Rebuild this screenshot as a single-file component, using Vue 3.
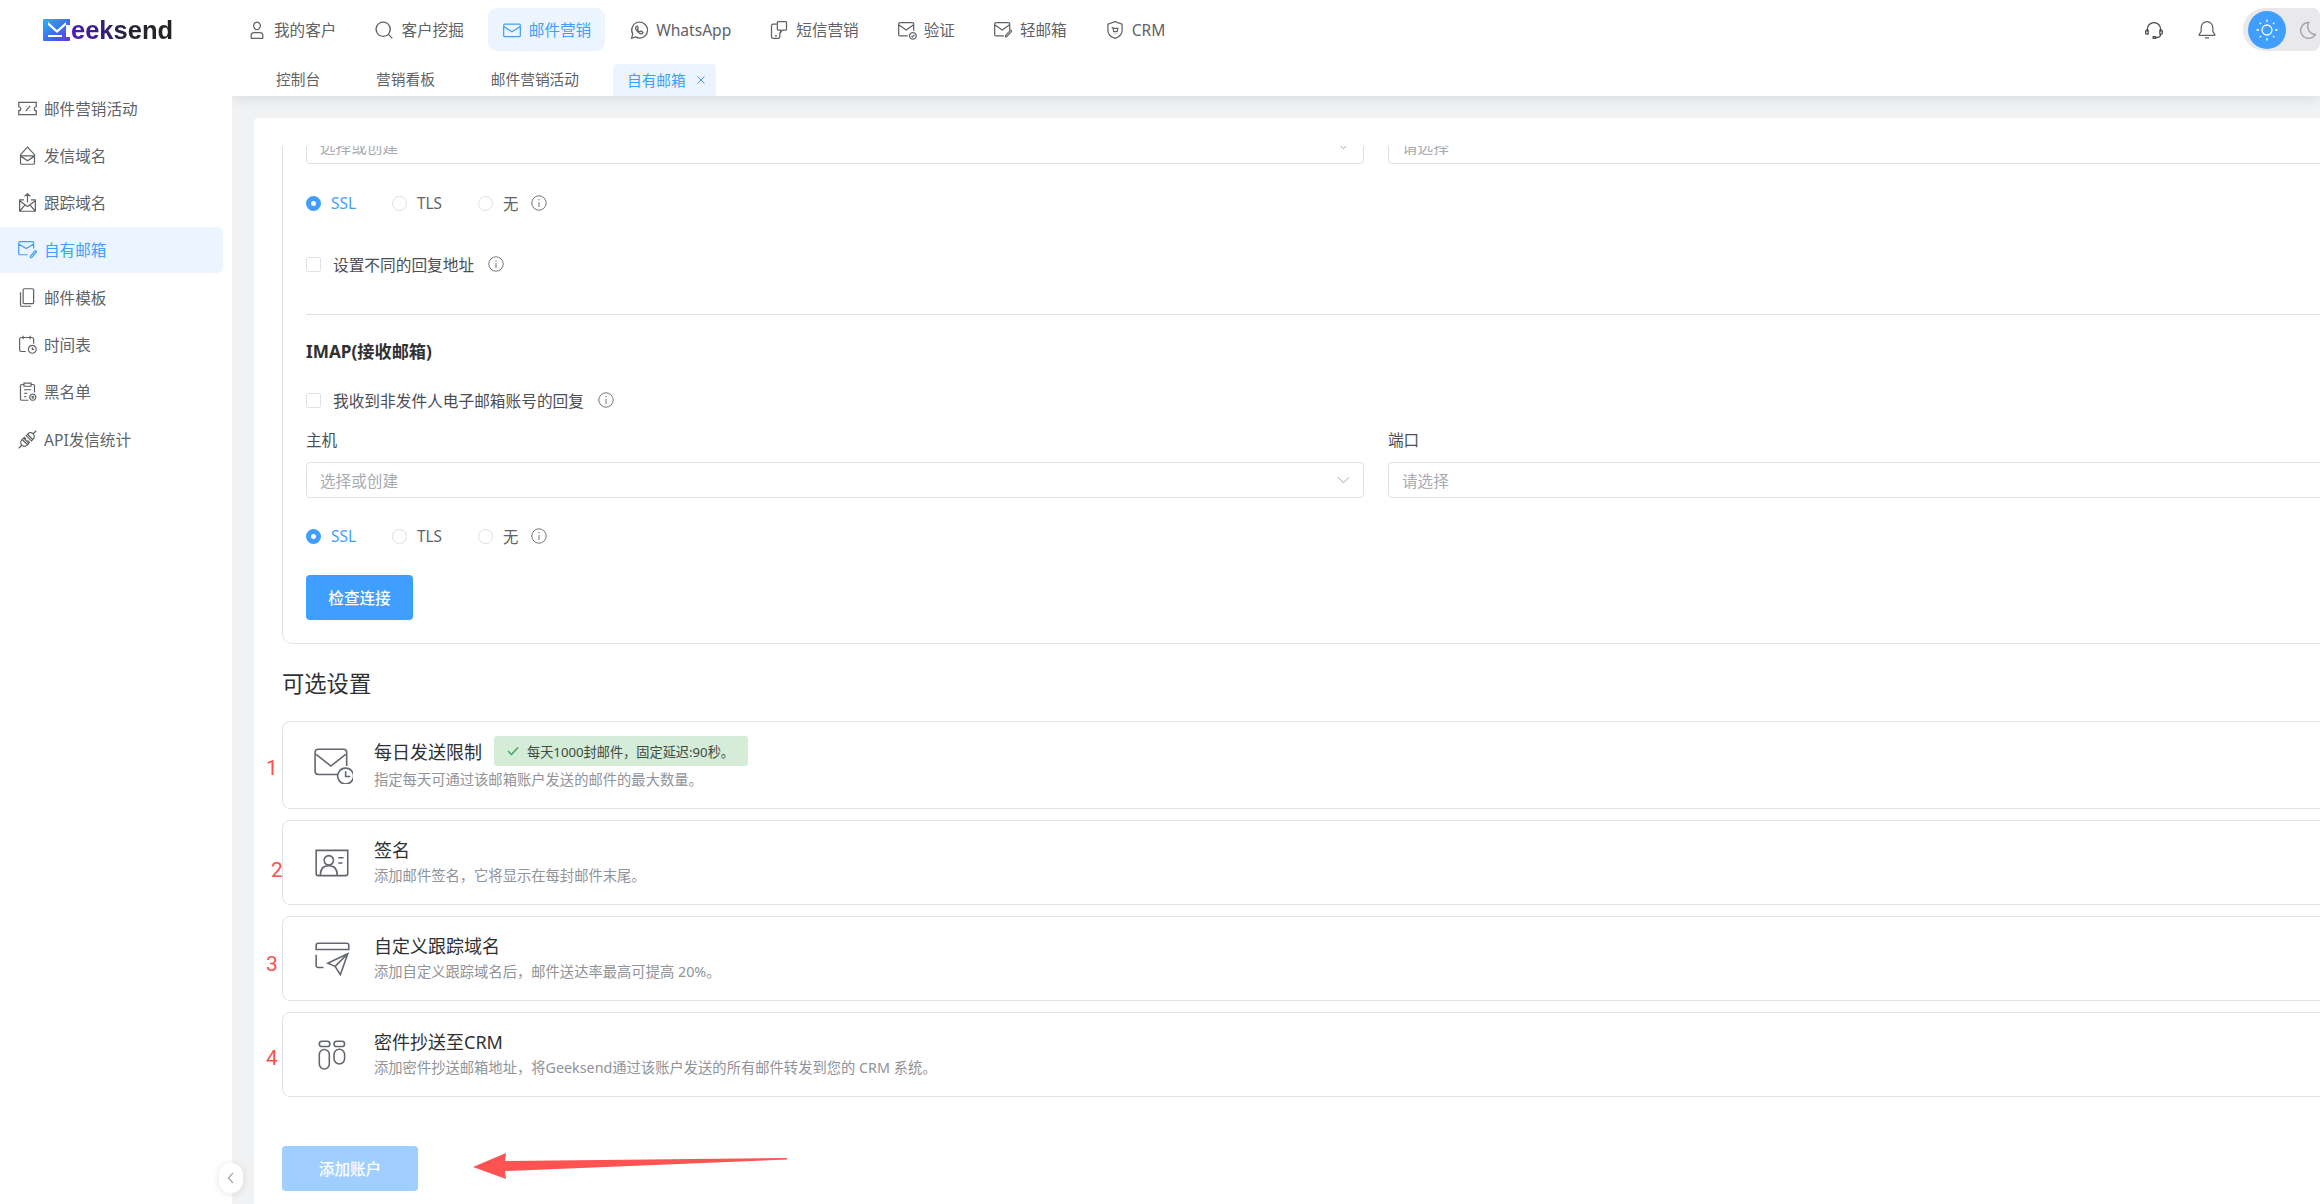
<script setup>
const mail = 'M3.5 5h17a1.5 1.5 0 0 1 1.5 1.5v12a1.5 1.5 0 0 1-1.5 1.5h-17A1.5 1.5 0 0 1 2 18.5v-12A1.5 1.5 0 0 1 3.500 5zM2.500 8l9.500 6 9.500-6'
const nav = [
  { t: '我的客户', d: 'M12 2.500a4 4.500 0 1 0 .01 0zM5 21.500v-3a3.500 3.500 0 0 1 3.500-3.500h7a3.500 3.500 0 0 1 3.500 3.500v3a.5.5 0 0 1-.5.5h-13a.5.5 0 0 1-.5-.5z' },
  { t: '客户挖掘', d: 'M11 2.500a8.500 8.500 0 1 0 .01 0zM17 17l5 5' },
  { t: '邮件营销', d: mail, on: true },
  { t: 'WhatsApp', d: 'M3 22l1.500-5.200A9.500 9.500 0 1 1 8 20.300zM9 7.500c-1.500 1-1.500 3 .5 5.700s4.500 4 6.300 3.200l1-1.700-2.500-1.500-1.200 1c-1.300-.5-2.500-2-3-3.200l1-1.200-1-2.500z' },
  { t: '短信营销', d: 'M9 5H5a2 2 0 0 0-2 2v13a2 2 0 0 0 2 2h6a2 2 0 0 0 2-2v-5M7 19h2.500M11 2h9a1 1 0 0 1 1 1v8a1 1 0 0 1-1 1h-4l-2 3v-3h-3a1 1 0 0 1-1-1V3a1 1 0 0 1 1-1z' },
  { t: '验证', d: 'M13 19H3.500A1.500 1.500 0 0 1 2 17.500v-13A1.500 1.500 0 0 1 3.500 3h15A1.500 1.500 0 0 1 20 4.500V13M2.500 6l8.500 6 8.500-6M19 15a4 4 0 1 0 .01 0zM17.300 19l1.300 1.300 2.200-2.500' },
  { t: '轻邮箱', d: 'M13 19H3.500A1.500 1.500 0 0 1 2 17.500v-13A1.500 1.500 0 0 1 3.500 3h15A1.500 1.500 0 0 1 20 4.500V12M2.500 6l8.500 6 8.500-6M22 14l-5.500 6c-.8 1-2.300-.3-1.500-1.300l5.500-6c.8-.8 2.300.3 1.500 1.300z' },
  { t: 'CRM', d: 'M12 2l8.500 3v8c0 4.500-4 7.500-8.500 9-4.500-1.500-8.500-4.500-8.500-9V5zM8 9h1.500l1 5h4l1-4H10M11 16.500h.5M14 16.500h.5' },
]
const side = [
  { t: '邮件营销活动', d: 'M2 5h20v5a2 2 0 0 0 0 4.500V19H2v-4.500a2 2 0 0 0 0-4.500zM15 9l-5 6M10 9.500h.5M14.500 14.500h.5' },
  { t: '发信域名', d: 'M4 11l8-8.500 8 8.500v9.500a1.500 1.500 0 0 1-1.500 1.500h-13A1.500 1.500 0 0 1 4 20.500zM4 12.500h16M4.500 13l7.500 5 7.500-5' },
  { t: '跟踪域名', d: 'M8 9H3v13h18V9h-5M3 10l9 6.500 9-6.500M3 22l6-7M21 22l-6-7M12 12V2M8.500 5L12 2l3.500 3' },
  { t: '自有邮箱', d: 'M12 18H3.500A1.500 1.500 0 0 1 2 16.500v-12A1.500 1.500 0 0 1 3.500 3h14A1.500 1.500 0 0 1 19 4.500V11M2.500 6L10.500 11 18.500 6M22 15l-5 6c-.8 1-2.300-.3-1.500-1.300l5-6c.8-.8 2.300.3 1.500 1.300z', on: true },
  { t: '邮件模板', d: 'M7 3.500A1.500 1.500 0 0 1 8.500 2h9A1.500 1.500 0 0 1 19 3.500V18a1 1 0 0 1-1 1H8a1 1 0 0 1-1-1zM4 6v14.500A1.500 1.500 0 0 0 5.500 22H16' },
  { t: '时间表', d: 'M10 20H5a2 2 0 0 1-2-2V6a2 2 0 0 1 2-2h12a2 2 0 0 1 2 2v5M7 2v4M15 2v4M17.500 13a4.500 4.500 0 1 0 .01 0zM17.500 15v2.500h2' },
  { t: '黑名单', d: 'M8 4H5.500A1.500 1.500 0 0 0 4 5.500v15A1.500 1.500 0 0 0 5.500 22H13M16 4h2.500A1.500 1.500 0 0 1 20 5.500V13M8 2.500h8V6H8zM8 10h8M8 14h4M8 18h3M18 15a3.500 3.500 0 1 0 .01 0zM16.800 17.300l2.400 2.400M19.200 17.300l-2.400 2.400' },
  { t: 'API发信统计', d: 'M2 22l4-4M6 12l6 6M7.500 10.500l6 6-2 2a4 4 0 0 1-6-6zM22 2l-4 4M12 6l6 6M10.500 7.500l2-2a4 4 0 0 1 6 6l-2 2zM8 9l2.500 2.500M12 13l2.500 2.500' },
]
const tabs = ['控制台', '营销看板', '邮件营销活动']
const opts = [
  { cls: 'c1', n: '1', t: '每日发送限制', s: '指定每天可通过该邮箱账户发送的邮件的最大数量。', badge: '每天1000封邮件，固定延迟:90秒。',
    d: 'M24 27H5a3 3 0 0 1-3-3V6a3 3 0 0 1 3-3h24a3 3 0 0 1 3 3v13M3 8l14 11L31 8M31 21a7.500 7.500 0 1 0 .01 0zM31 24v5h4.500' },
  { cls: 'c2', n: '2', t: '签名', s: '添加邮件签名，它将显示在每封邮件末尾。',
    d: 'M3 6h30v22a2 2 0 0 1-2 2H5a2 2 0 0 1-2-2zM15 11a4.500 4.500 0 1 0 .01 0zM7 29.500c0-6 3-9 8-9s8 3 8 9M24 13h5M24 18h4' },
  { cls: 'c3', n: '3', t: '自定义跟踪域名', s: '添加自定义跟踪域名后，邮件送达率最高可提高 20%。',
    d: 'M5 3h27a2 2 0 0 1 2 2v4H3V5a2 2 0 0 1 2-2zM3 14v11a2 2 0 0 0 2 1h5M33 13L14 22l7 3 5 8zM33 13L21 25' },
  { cls: 'c4', n: '4', t: '密件抄送至CRM', s: '添加密件抄送邮箱地址，将Geeksend通过该账户发送的所有邮件转发到您的 CRM 系统。',
    d: 'M8.500 5h5a2.500 2.500 0 0 1 0 5h-5a2.500 2.500 0 0 1 0-5zM22.500 5h5a2.500 2.500 0 0 1 0 5h-5a2.500 2.500 0 0 1 0-5zM6 17.500a4.750 4.750 0 0 1 9.500 0v9a4.750 4.750 0 0 1-9.500 0zM20 17.500a5 5 0 0 1 10 0v4a5 5 0 0 1-10 0z' },
]
</script>

<template>
  <div class="app">
    <header class="top">
      <div class="logo">
        <svg class="mark" viewBox="0 0 28 22">
          <defs>
            <linearGradient id="lg" x1="0" y1="0" x2="1" y2="1">
              <stop offset="0" stop-color="#22b8f5" />
              <stop offset=".55" stop-color="#3d6cf0" />
              <stop offset="1" stop-color="#6a35d8" />
            </linearGradient>
          </defs>
          <path fill="url(#lg)" d="M1 0h26v6l-4 0v11H23v1h4v3a1 1 0 0 1-1 1H1a1 1 0 0 1-1-1V1a1 1 0 0 1 1-1z" />
          <path fill="#fff" d="M5 3l9 8 9-8v3l-9 8-9-8zM5 16h14v2H5z" />
        </svg>
        <span class="word">eeksend</span>
      </div>
      <nav class="nav">
        <a v-for="n in nav" :key="n.t" class="nav-item" :class="{ on: n.on }">
          <svg class="ic" viewBox="0 0 24 24"><path :d="n.d" /></svg>
          <span>{{ n.t }}</span>
        </a>
      </nav>
      <div class="tools">
        <svg class="tool head" viewBox="0 0 24 24">
          <path d="M4 14V11a8 8 0 0 1 16 0v3M3 12h2v5H3a1.500 1.500 0 0 1-1-1.500v-2A1.500 1.500 0 0 1 3 12zM19 12h2a1.500 1.500 0 0 1 1 1.500v2a1.500 1.500 0 0 1-1 1.500h-2zM20 17c0 2-2 4-6 4M11 20h3v2h-3z" />
        </svg>
        <svg class="tool bell" viewBox="0 0 24 24">
          <path d="M12 2a7 7 0 0 0-7 7v5l-2.500 3.500a.5.5 0 0 0 .5.8h18a.5.5 0 0 0 .5-.8L19 14V9a7 7 0 0 0-7-7zM9.500 21.500h5" />
        </svg>
        <div class="theme">
          <span class="sun">
            <svg viewBox="0 0 24 24"><path d="M12 7a5 5 0 1 0 .01 0zM12 1.500v2.500M12 20v2.500M1.500 12H4M20 12h2.500M4.600 4.600l1.500 1.500M17.900 17.900l1.500 1.500M4.600 19.400l1.500-1.500M17.900 6.100l1.500-1.500" /></svg>
          </span>
          <svg class="moon" viewBox="0 0 24 24"><path d="M14 3a9.500 9.500 0 1 0 8 14.500A10 10 0 0 1 14 3z" /></svg>
        </div>
      </div>
    </header>

    <div class="below">
      <aside class="side">
        <a v-for="s in side" :key="s.t" class="side-item" :class="{ on: s.on }">
          <svg class="ic" viewBox="0 0 24 24"><path :d="s.d" /></svg>
          <span>{{ s.t }}</span>
        </a>
        <button class="collapse" aria-label="收起">
          <svg viewBox="0 0 12 16"><path d="M8 3L3.500 8 8 13" /></svg>
        </button>
      </aside>

      <main class="main">
        <div class="tabs">
          <span v-for="t in tabs" :key="t" class="tab">{{ t }}</span>
          <span class="tab active">自有邮箱<svg viewBox="0 0 10 10"><path d="M1.500 1.500l7 7M8.500 1.500l-7 7" /></svg></span>
        </div>
        <div class="content">
          <section class="card">
            <div class="scroller">
              <div class="panel">
                <div class="pair">
                  <div class="select"><span>选择或创建</span><svg class="chev" viewBox="0 0 14 8"><path d="M1 1l6 6 6-6" /></svg></div>
                  <div class="select"><span>请选择</span></div>
                </div>
                <div class="radios r1">
                  <label class="radio on"><i></i>SSL</label>
                  <label class="radio"><i></i>TLS</label>
                  <label class="radio"><i></i>无</label>
                  <svg class="info" viewBox="0 0 16 16"><circle cx="8" cy="8" r="7.200" /><path d="M8 7v5M8 4v1.400" /></svg>
                </div>
                <label class="check c-a"><i></i>设置不同的回复地址<svg class="info" viewBox="0 0 16 16"><circle cx="8" cy="8" r="7.200" /><path d="M8 7v5M8 4v1.400" /></svg></label>
                <hr class="divider" />
                <h3 class="sub">IMAP(接收邮箱)</h3>
                <label class="check c-b"><i></i>我收到非发件人电子邮箱账号的回复<svg class="info" viewBox="0 0 16 16"><circle cx="8" cy="8" r="7.200" /><path d="M8 7v5M8 4v1.400" /></svg></label>
                <div class="pair labels">
                  <span>主机</span>
                  <span>端口</span>
                </div>
                <div class="pair fields">
                  <div class="select"><span>选择或创建</span><svg class="chev" viewBox="0 0 14 8"><path d="M1 1l6 6 6-6" /></svg></div>
                  <div class="select"><span>请选择</span></div>
                </div>
                <div class="radios r2">
                  <label class="radio on"><i></i>SSL</label>
                  <label class="radio"><i></i>TLS</label>
                  <label class="radio"><i></i>无</label>
                  <svg class="info" viewBox="0 0 16 16"><circle cx="8" cy="8" r="7.200" /><path d="M8 7v5M8 4v1.400" /></svg>
                </div>
                <button class="btn primary">检查连接</button>
              </div>

              <h2 class="section">可选设置</h2>

              <div v-for="o in opts" :key="o.n" class="opt" :class="o.cls">
                <span class="num">{{ o.n }}</span>
                <svg class="opt-ic" viewBox="0 0 38 36"><path :d="o.d" /></svg>
                <div class="opt-text">
                  <div class="opt-title">
                    <span>{{ o.t }}</span>
                    <span v-if="o.badge" class="badge">
                      <svg viewBox="0 0 12 10"><path d="M1 5l3.500 3.500L11 1.500" /></svg>{{ o.badge }}
                    </span>
                  </div>
                  <div class="opt-sub">{{ o.s }}</div>
                </div>
              </div>

              <div class="submit">
                <button class="btn disabled">添加账户</button>
                <svg class="arrow" viewBox="0 0 316 28"><path d="M0 14L33 0l-1 8L314 5v1.500L32 18l1 8z" /></svg>
              </div>
            </div>
          </section>
        </div>
      </main>
    </div>
  </div>
</template>

<style scoped>
.app {
  position: relative;
  width: 2320px;
  height: 1204px;
  display: flex;
  flex-direction: column;
  overflow: hidden;
  background: #fff;
  font-family: "Noto Sans", "Noto Sans CJK SC", sans-serif;
  font-size: 15.6px;
  color: #606266;
}
svg { fill: none; stroke: currentColor; display: block; flex: none; }
.top {
  height: 52px;
  flex: none;
  display: flex;
  align-items: flex-start;
  padding-top: 8px;
  box-sizing: border-box;
}
.logo {
  width: 233px;
  height: 43px;
  box-sizing: border-box;
  padding-left: 43px;
  display: flex;
  align-items: center;
  flex: none;
}
.mark { width: 28px; height: 22px; stroke: none; }
.word {
  font-family: "Liberation Sans", sans-serif;
  font-weight: 700;
  font-size: 25.500px;
  line-height: 30px;
  background: linear-gradient(90deg, #4a1fb5 0, #3a1c8a 25%, #262433 55%, #222 100%);
  -webkit-background-clip: text;
  background-clip: text;
  color: transparent;
}
.nav { display: flex; gap: 10px; }
.nav-item {
  height: 43px;
  padding: 0 14px;
  display: flex;
  align-items: center;
  gap: 7px;
  border-radius: 9px;
  white-space: nowrap;
}
.nav-item .ic { width: 20px; height: 20px; stroke-width: 1.500; }
.nav-item.on { background: #ecf5ff; color: #409eff; }
.tools {
  margin-left: auto;
  display: flex;
  align-items: center;
  height: 43px;
}
.tool { stroke-width: 1.500; color: #4a4c52; }
.head { width: 20px; height: 20px; margin-right: 33px; }
.bell { width: 20px; height: 20px; margin-right: 26px; color: #606266; }
.theme {
  width: 77px;
  height: 43px;
  box-sizing: border-box;
  padding-left: 5px;
  display: flex;
  align-items: center;
  background: #e9e9ec;
  border-radius: 22px 8px 8px 22px;
}
.sun {
  width: 38px;
  height: 38px;
  border-radius: 50%;
  background: #409eff;
  color: #fff;
  display: flex;
  align-items: center;
  justify-content: center;
}
.sun svg { width: 24px; height: 24px; stroke-width: 1.300; }
.moon { width: 20px; height: 20px; margin-left: 11px; color: #a3a5ab; stroke-width: 1.800; }

.below { flex: 1; min-height: 0; display: flex; }
.side {
  position: relative;
  width: 232px;
  flex: none;
  box-sizing: border-box;
  padding: 33px 9px 0 0;
  display: flex;
  flex-direction: column;
  gap: 1.300px;
  background: #fff;
  z-index: 2;
}
.side-item {
  height: 46px;
  flex: none;
  padding-left: 17px;
  display: flex;
  align-items: center;
  gap: 7px;
  border-radius: 0 6px 6px 0;
  white-space: nowrap;
}
.side-item .ic { width: 21px; height: 21px; stroke-width: 1.400; }
.side-item.on { background: #ecf5ff; color: #409eff; }
.side-item span { margin-left: -1px; }
.collapse {
  position: absolute;
  right: -11px;
  bottom: 11px;
  width: 24px;
  height: 30px;
  padding: 0;
  border: 0;
  border-radius: 12px;
  background: #fff;
  box-shadow: 0 1px 8px rgba(0, 0, 0, .1);
  display: flex;
  align-items: center;
  justify-content: center;
  color: #8a8c92;
}
.collapse svg { width: 12px; height: 16px; stroke-width: 1.100; }

.main { flex: 1; min-width: 0; display: flex; flex-direction: column; }
.tabs {
  height: 44px;
  flex: none;
  box-sizing: border-box;
  padding: 12px 0 0 30px;
  display: flex;
  background: #fff;
  box-shadow: 0 3px 12px rgba(0, 0, 0, .09);
  clip-path: inset(0 0 -24px 0);
  position: relative;
  z-index: 1;
  font-size: 14.700px;
}
.tab {
  padding: 0 14px;
  margin-right: 28px;
  line-height: 31px;
  white-space: nowrap;
}
.tab.active {
  margin-left: -8px;
  margin-right: 0;
  width: 103px;
  box-sizing: border-box;
  display: flex;
  align-items: center;
  gap: 10px;
  background: #ecf5ff;
  color: #409eff;
  border-radius: 4px 4px 0 0;
}
.tab.active svg { width: 10px; height: 10px; stroke-width: 1; }
.content {
  flex: 1;
  min-height: 0;
  padding: 22px 0 0 22px;
  background: #f1f2f4;
  display: flex;
}
.card {
  flex: 1;
  min-width: 0;
  padding-top: 28px;
  background: #fff;
  border-radius: 4px 0 0 0;
  display: flex;
}
.scroller {
  flex: 1;
  min-width: 0;
  padding-left: 28px;
  overflow: hidden;
}
.panel {
  width: 2190px;
  box-sizing: border-box;
  margin-top: -19px;
  padding: 0 23px 23px;
  border: 1px solid #e0e2ea;
  border-radius: 10px;
}
.pair {
  display: grid;
  grid-template-columns: 1058px 1058px;
  gap: 24px;
}
.select {
  height: 36px;
  box-sizing: border-box;
  padding: 0 13px;
  display: flex;
  align-items: center;
  justify-content: space-between;
  border: 1px solid #dfe1ea;
  border-radius: 4px;
  color: #a8abb2;
  font-size: 15.600px;
  background: #fff;
}
.chev { width: 13px; height: 8px; color: #9a9ca2; stroke-width: 1; }
.radios { display: flex; align-items: center; height: 20px; }
.r1 { margin-top: 29px; }
.r2 { margin-top: 28px; }
.radio {
  display: flex;
  align-items: center;
  gap: 10px;
  margin-right: 36px;
  color: #606266;
  font-size: 15.400px;
}
.radio:nth-of-type(3) { margin-right: 13px; }
.radio i {
  width: 15px;
  height: 15px;
  box-sizing: border-box;
  border: 1px solid #dcdfe6;
  border-radius: 50%;
  background: #fff;
}
.radio.on { color: #409eff; }
.radio.on i { border: 5px solid #409eff; }
.info { width: 16px; height: 16px; color: #73767c; stroke-width: 1; }
.check {
  display: flex;
  align-items: center;
  height: 20px;
  font-size: 15.700px;
  color: #4c4e54;
}
.check i {
  width: 15px;
  height: 15px;
  box-sizing: border-box;
  border: 1px solid #dfe1e8;
  border-radius: 2px;
  margin-right: 12px;
}
.check .info { margin-left: 14px; }
.c-a { margin-top: 41px; }
.c-b { margin-top: 26px; }
.divider {
  height: 1px;
  margin: 40px 0 0;
  border: 0;
  background: #e0e2ea;
}
.sub {
  margin: 25px 0 0;
  font-size: 17.200px;
  line-height: 24px;
  font-weight: 700;
  color: #303133;
}
.labels { margin-top: 20px; line-height: 20px; font-size: 15.600px; color: #4c4e54; }
.fields { margin-top: 12px; }
.btn {
  display: block;
  height: 45px;
  border: 0;
  border-radius: 4px;
  color: #fff;
  font: 500 15.600px "Noto Sans", "Noto Sans CJK SC", sans-serif;
  padding: 0;
}
.primary { width: 107px; margin-top: 29px; background: #409eff; }
.disabled { width: 136px; background: #a0cfff; }
.section {
  margin: 25px 0 22px;
  font-size: 22.300px;
  line-height: 30px;
  font-weight: 400;
  color: #303133;
}
.opt {
  position: relative;
  width: 2190px;
  box-sizing: border-box;
  height: 85px;
  margin-bottom: 11px;
  padding-left: 30px;
  display: flex;
  align-items: center;
  border: 1px solid #e0e2ea;
  border-radius: 8px;
}
.opt.c1 { height: 88px; }
.opt-ic { width: 40px; height: 38px; color: #62666e; stroke-width: 1.500; margin-right: 21px; }
.opt-text { margin-top: -3px; }
.opt-title {
  display: flex;
  align-items: center;
  min-height: 25px;
  margin-bottom: 3px;
  font-size: 18px;
  color: #303133;
  white-space: nowrap;
}
.opt-sub { font-size: 14.300px; line-height: 22px; color: #909399; white-space: nowrap; }
.badge {
  height: 30px;
  margin-left: 12px;
  width: 254px;
  box-sizing: border-box;
  padding-left: 13px;
  display: flex;
  align-items: center;
  gap: 8px;
  font-size: 13.200px;
  background: #d4ecd8;
  border-radius: 3px;
  color: #3d4a42;
}
.badge svg { width: 12px; height: 10px; color: #3aa757; stroke-width: 1.400; }
.num {
  position: absolute;
  left: -17px;
  font-family: Roboto, sans-serif;
  font-size: 21px;
  line-height: 24px;
  color: #ff4d4f;
}
.c1 .num { top: 34px; }
.c2 .num { top: 37px; left: -12px; }
.c3 .num { top: 35px; }
.c4 .num { top: 33px; }
.submit { position: relative; margin-top: 49px; }
.arrow {
  position: absolute;
  left: 191px;
  top: 7px;
  width: 316px;
  height: 28px;
  fill: #ff5252;
  stroke: none;
}
</style>

<style>
html, body { margin: 0; overflow: hidden; background: #fff; }
</style>
